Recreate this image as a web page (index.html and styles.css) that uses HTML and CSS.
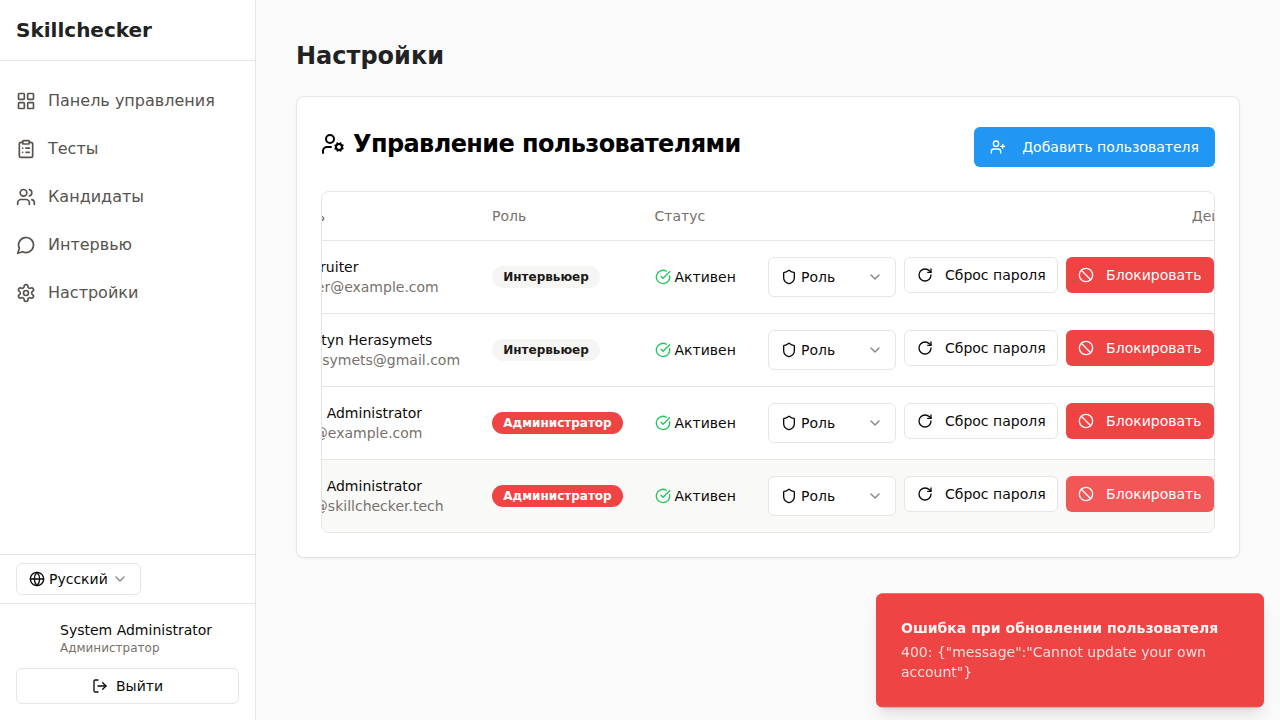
FILE: index.html
```html
<!DOCTYPE html>
<html lang="ru">
<head>
  <meta charset="UTF-8" />
  <meta name="viewport" content="width=device-width, initial-scale=1.0"/>
  <title>Skillchecker - Настройки</title>
  <link rel="stylesheet" href="styles.css">
</head>
<body>
  <!-- icon sprite -->
  <svg class="sprite" xmlns="http://www.w3.org/2000/svg">
    <symbol id="i-grid" viewBox="0 0 24 24"><rect x="3" y="3" width="7" height="7" rx="1"/><rect x="14" y="3" width="7" height="7" rx="1"/><rect x="14" y="14" width="7" height="7" rx="1"/><rect x="3" y="14" width="7" height="7" rx="1"/></symbol>
    <symbol id="i-clipboard" viewBox="0 0 24 24"><rect x="8" y="2" width="8" height="4" rx="1"/><path d="M16 4h2a2 2 0 0 1 2 2v14a2 2 0 0 1-2 2H6a2 2 0 0 1-2-2V6a2 2 0 0 1 2-2h2"/><path d="M12 11h4"/><path d="M12 16h4"/><path d="M8 11h.01"/><path d="M8 16h.01"/></symbol>
    <symbol id="i-users" viewBox="0 0 24 24"><path d="M16 21v-2a4 4 0 0 0-4-4H6a4 4 0 0 0-4 4v2"/><circle cx="9" cy="7" r="4"/><path d="M22 21v-2a4 4 0 0 0-3-3.87"/><path d="M16 3.13a4 4 0 0 1 0 7.75"/></symbol>
    <symbol id="i-message" viewBox="0 0 24 24"><path d="M7.9 20A9 9 0 1 0 4 16.1L2 22Z"/></symbol>
    <symbol id="i-settings" viewBox="0 0 24 24"><path d="M12.22 2h-.44a2 2 0 0 0-2 2v.18a2 2 0 0 1-1 1.73l-.43.25a2 2 0 0 1-2 0l-.15-.08a2 2 0 0 0-2.73.73l-.22.38a2 2 0 0 0 .73 2.73l.15.1a2 2 0 0 1 1 1.72v.51a2 2 0 0 1-1 1.74l-.15.09a2 2 0 0 0-.73 2.73l.22.38a2 2 0 0 0 2.73.73l.15-.08a2 2 0 0 1 2 0l.43.25a2 2 0 0 1 1 1.73V20a2 2 0 0 0 2 2h.44a2 2 0 0 0 2-2v-.18a2 2 0 0 1 1-1.73l.43-.25a2 2 0 0 1 2 0l.15.08a2 2 0 0 0 2.73-.73l.22-.39a2 2 0 0 0-.73-2.73l-.15-.08a2 2 0 0 1-1-1.74v-.5a2 2 0 0 1 1-1.74l.15-.09a2 2 0 0 0 .73-2.73l-.22-.38a2 2 0 0 0-2.73-.73l-.15.08a2 2 0 0 1-2 0l-.43-.25a2 2 0 0 1-1-1.73V4a2 2 0 0 0-2-2z"/><circle cx="12" cy="12" r="3"/></symbol>
    <symbol id="i-globe" viewBox="0 0 24 24"><circle cx="12" cy="12" r="10"/><path d="M12 2a14.5 14.5 0 0 0 0 20 14.5 14.5 0 0 0 0-20"/><path d="M2 12h20"/></symbol>
    <symbol id="i-chevron" viewBox="0 0 24 24"><path d="m6 9 6 6 6-6"/></symbol>
    <symbol id="i-logout" viewBox="0 0 24 24"><path d="M9 21H5a2 2 0 0 1-2-2V5a2 2 0 0 1 2-2h4"/><path d="m16 17 5-5-5-5"/><path d="M21 12H9"/></symbol>
    <symbol id="i-usercog" viewBox="0 0 24 24"><circle cx="18" cy="15" r="3"/><circle cx="9" cy="7" r="4"/><path d="M10 15H6a4 4 0 0 0-4 4v2"/><path d="m21.7 16.4-.9-.3"/><path d="m15.2 13.9-.9-.3"/><path d="m16.6 18.7.3-.9"/><path d="m19.1 12.2.3-.9"/><path d="m19.6 18.7-.4-1"/><path d="m16.8 12.3-.4-1"/><path d="m14.3 16.6 1-.4"/><path d="m20.7 13.8 1-.4"/></symbol>
    <symbol id="i-userplus" viewBox="0 0 24 24"><path d="M16 21v-2a4 4 0 0 0-4-4H6a4 4 0 0 0-4 4v2"/><circle cx="9" cy="7" r="4"/><path d="M19 8v6"/><path d="M22 11h-6"/></symbol>
    <symbol id="i-check" viewBox="0 0 24 24"><path d="M21.801 10A10 10 0 1 1 17 3.335"/><path d="m9 11 3 3L22 4"/></symbol>
    <symbol id="i-shield" viewBox="0 0 24 24"><path d="M20 13c0 5-3.5 7.5-7.66 8.95a1 1 0 0 1-.67-.01C7.5 20.5 4 18 4 13V6a1 1 0 0 1 1-1c2 0 4.5-1.2 6.24-2.72a1.17 1.17 0 0 1 1.52 0C14.51 3.81 17 5 19 5a1 1 0 0 1 1 1z"/></symbol>
    <symbol id="i-rotate" viewBox="0 0 24 24"><path d="M21 12a9 9 0 1 1-9-9c2.52 0 4.93 1 6.74 2.74L21 8"/><path d="M21 3v5h-5"/></symbol>
    <symbol id="i-ban" viewBox="0 0 24 24"><circle cx="12" cy="12" r="10"/><path d="m4.9 4.9 14.2 14.2"/></symbol>
  </svg>

  <div class="app">
    <aside class="sidebar">
      <div class="logo">Skillchecker</div>
      <nav class="nav">
        <a class="nav-item"><svg class="icon icon-20"><use href="#i-grid"/></svg>Панель управления</a>
        <a class="nav-item"><svg class="icon icon-20"><use href="#i-clipboard"/></svg>Тесты</a>
        <a class="nav-item"><svg class="icon icon-20"><use href="#i-users"/></svg>Кандидаты</a>
        <a class="nav-item"><svg class="icon icon-20"><use href="#i-message"/></svg>Интервью</a>
        <a class="nav-item"><svg class="icon icon-20"><use href="#i-settings"/></svg>Настройки</a>
      </nav>
      <div class="lang-box">
        <button class="lang-btn">
          <svg class="icon"><use href="#i-globe"/></svg>
          <span>Русский</span>
          <svg class="icon chevron"><use href="#i-chevron"/></svg>
        </button>
      </div>
      <div class="user-box">
        <div class="user-info">
          <span class="avatar"></span>
          <div>
            <div class="user-name">System Administrator</div>
            <div class="user-role">Администратор</div>
          </div>
        </div>
        <button class="logout-btn"><svg class="icon"><use href="#i-logout"/></svg>Выйти</button>
      </div>
    </aside>

    <main class="main">
      <h1 class="page-title">Настройки</h1>
      <section class="card">
        <div class="card-head">
          <h2 class="card-title"><svg class="icon icon-24"><use href="#i-usercog"/></svg>Управление пользователями</h2>
          <button class="add-btn"><svg class="icon"><use href="#i-userplus"/></svg>Добавить пользователя</button>
        </div>

        <div class="table-wrap">
          <table class="users">
            <thead>
              <tr>
                <th class="col-user">Пользователь</th>
                <th class="col-role">Роль</th>
                <th class="col-status">Статус</th>
                <th class="col-actions">Действия</th>
              </tr>
            </thead>
            <tbody>
              <tr>
                <td>
                  <div class="name">HR Recruiter</div>
                  <div class="email">recruiter@example.com</div>
                </td>
                <td><span class="badge">Интервьюер</span></td>
                <td><span class="status"><svg class="icon"><use href="#i-check"/></svg>Активен</span></td>
                <td>
                  <div class="actions">
                    <div class="role-select"><svg class="icon"><use href="#i-shield"/></svg><span>Роль</span><svg class="icon chevron"><use href="#i-chevron"/></svg></div>
                    <button class="btn"><svg class="icon"><use href="#i-rotate"/></svg>Сброс пароля</button>
                    <button class="btn btn-red"><svg class="icon"><use href="#i-ban"/></svg>Блокировать</button>
                  </div>
                </td>
              </tr>
              <tr>
                <td>
                  <div class="name">Kostiantyn Herasymets</div>
                  <div class="email">ko.herasymets@gmail.com</div>
                </td>
                <td><span class="badge">Интервьюер</span></td>
                <td><span class="status"><svg class="icon"><use href="#i-check"/></svg>Активен</span></td>
                <td>
                  <div class="actions">
                    <div class="role-select"><svg class="icon"><use href="#i-shield"/></svg><span>Роль</span><svg class="icon chevron"><use href="#i-chevron"/></svg></div>
                    <button class="btn"><svg class="icon"><use href="#i-rotate"/></svg>Сброс пароля</button>
                    <button class="btn btn-red"><svg class="icon"><use href="#i-ban"/></svg>Блокировать</button>
                  </div>
                </td>
              </tr>
              <tr>
                <td>
                  <div class="name">System Administrator</div>
                  <div class="email">admin@example.com</div>
                </td>
                <td><span class="badge badge-admin">Администратор</span></td>
                <td><span class="status"><svg class="icon"><use href="#i-check"/></svg>Активен</span></td>
                <td>
                  <div class="actions">
                    <div class="role-select"><svg class="icon"><use href="#i-shield"/></svg><span>Роль</span><svg class="icon chevron"><use href="#i-chevron"/></svg></div>
                    <button class="btn"><svg class="icon"><use href="#i-rotate"/></svg>Сброс пароля</button>
                    <button class="btn btn-red"><svg class="icon"><use href="#i-ban"/></svg>Блокировать</button>
                  </div>
                </td>
              </tr>
              <tr class="row-hover">
                <td>
                  <div class="name">System Administrator</div>
                  <div class="email">admin@skillchecker.tech</div>
                </td>
                <td><span class="badge badge-admin">Администратор</span></td>
                <td><span class="status"><svg class="icon"><use href="#i-check"/></svg>Активен</span></td>
                <td>
                  <div class="actions">
                    <div class="role-select"><svg class="icon"><use href="#i-shield"/></svg><span>Роль</span><svg class="icon chevron"><use href="#i-chevron"/></svg></div>
                    <button class="btn"><svg class="icon"><use href="#i-rotate"/></svg>Сброс пароля</button>
                    <button class="btn btn-red btn-faded"><svg class="icon"><use href="#i-ban"/></svg>Блокировать</button>
                  </div>
                </td>
              </tr>
            </tbody>
          </table>
        </div>
      </section>
    </main>
  </div>

  <div class="toast">
    <div class="toast-title">Ошибка при обновлении пользователя</div>
    <div class="toast-text">400: {"message":"Cannot update your own account"}</div>
  </div>
</body>
</html>
```

FILE: styles.css
```css
* {
  box-sizing: border-box;
}
html, body {
  height: 100%;
}
body {
  margin: 0;
  font-family: "DejaVu Sans", sans-serif;
  font-size: 14px;
  line-height: 20px;
  color: #0c0a09;
  background: #fafafa;
  overflow: hidden;
}
button {
  font: inherit;
  color: inherit;
  background: none;
  cursor: pointer;
}
.sprite {
  display: none;
}
.icon {
  width: 16px;
  height: 16px;
  flex: none;
  fill: none;
  stroke: currentColor;
  stroke-width: 2;
  stroke-linecap: round;
  stroke-linejoin: round;
}
.icon-20 { width: 20px; height: 20px; }
.icon-24 { width: 24px; height: 24px; }
.chevron { opacity: 0.5; }

.app {
  display: flex;
  height: 100%;
}

/* sidebar */
.sidebar {
  width: 256px;
  flex: none;
  display: flex;
  flex-direction: column;
  background: #fff;
  border-right: 1px solid #e7e5e4;
}
.logo {
  height: 61px;
  padding: 0 16px;
  display: flex;
  align-items: center;
  font-size: 20px;
  font-weight: bold;
  color: #222;
  border-bottom: 1px solid #e7e5e4;
}
.nav {
  flex: 1;
  padding: 16px 16px 0;
}
.nav-item {
  height: 48px;
  display: flex;
  align-items: center;
  gap: 12px;
  font-size: 16px;
  color: #57534e;
}
.lang-box {
  padding: 8px 16px;
  border-top: 1px solid #e7e5e4;
}
.lang-btn {
  height: 32px;
  width: 125px;
  padding: 0 12px;
  display: flex;
  align-items: center;
  gap: 4px;
  background: #fff;
  border: 1px solid #e7e5e4;
  border-radius: 6px;
}
.lang-btn .chevron {
  margin-left: auto;
}
.user-box {
  padding: 16px;
  border-top: 1px solid #e7e5e4;
}
.user-info {
  display: flex;
  gap: 12px;
  margin-bottom: 12px;
}
.avatar {
  width: 32px;
  height: 32px;
  flex: none;
}
.user-role {
  font-size: 12px;
  line-height: 16px;
  color: #78716c;
}
.logout-btn {
  width: 100%;
  height: 36px;
  display: flex;
  align-items: center;
  justify-content: center;
  gap: 8px;
  background: #fff;
  border: 1px solid #e7e5e4;
  border-radius: 6px;
}

/* main */
.main {
  flex: 1;
  padding: 40px;
  min-width: 0;
}
.page-title {
  margin: 0 0 24px;
  font-size: 24px;
  line-height: 32px;
  font-weight: bold;
  color: #222;
}
.card {
  padding: 30px 24px 24px;
  background: #fff;
  border: 1px solid #e7e5e4;
  border-radius: 8px;
  box-shadow: 0 1px 2px rgba(0, 0, 0, 0.05);
}
.card-head {
  display: flex;
  justify-content: space-between;
  align-items: flex-start;
  margin-bottom: 24px;
}
.card-title {
  margin: 1px 0 0;
  display: flex;
  align-items: center;
  gap: 8px;
  font-size: 24px;
  line-height: 32px;
  letter-spacing: -0.6px;
  font-weight: bold;
  color: #000;
}
.add-btn {
  height: 40px;
  padding: 0 16px;
  display: flex;
  align-items: center;
  gap: 16px;
  color: #fff;
  background: #2196f3;
  border: none;
  border-radius: 6px;
}

/* users table, scrolled sideways inside its frame */
.table-wrap {
  overflow: hidden;
  background: #fff;
  border: 1px solid #e7e5e4;
  border-radius: 8px;
}
.users {
  width: 1016px;
  margin-left: -68px;
  table-layout: fixed;
  border-collapse: separate;
  border-spacing: 0;
}
.col-user { width: 222px; }
.col-role { width: 162.5px; }
.col-status { width: 113.5px; }
.users th {
  height: 49px;
  padding: 0 16px;
  text-align: left;
  font-weight: normal;
  color: #78716c;
  border-bottom: 1px solid #e7e5e4;
}
.users th.col-user {
  text-indent: -48px;
}
.users th.col-actions {
  padding-right: 8px;
  text-align: right;
}
.users td {
  height: 73px;
  padding: 16px;
  white-space: nowrap;
  border-bottom: 1px solid #e7e5e4;
}
.users tbody tr:last-child td {
  height: 72px;
  border-bottom: none;
}
.row-hover {
  background: #f9f9f7;
}
.email {
  color: #78716c;
}
.badge {
  display: inline-block;
  padding: 2px 11.25px;
  font-size: 12px;
  line-height: 18px;
  font-weight: bold;
  color: #1c1917;
  background: #f5f5f4;
  border-radius: 11px;
}
.badge-admin {
  color: #fff;
  background: #ef4444;
}
.status {
  display: flex;
  align-items: center;
  gap: 4px;
}
.status .icon {
  color: #22c55e;
}
.actions {
  display: flex;
  align-items: flex-start;
  gap: 8px;
}
.role-select {
  width: 128px;
  height: 40px;
  padding: 0 12px;
  display: flex;
  align-items: center;
  gap: 4px;
  background: #fff;
  border: 1px solid #e7e5e4;
  border-radius: 6px;
}
.role-select .chevron {
  margin-left: auto;
}
.btn {
  height: 36px;
  padding: 0 11.5px 0 12px;
  display: flex;
  align-items: center;
  gap: 12px;
  background: #fff;
  border: 1px solid #e7e5e4;
  border-radius: 6px;
}
.btn-red {
  width: 148px;
  padding: 0 12px;
  color: #fff;
  background: #ef4444;
  border: none;
}
.btn-faded {
  background: #f15757;
}

/* toast */
.toast {
  position: fixed;
  right: 16px;
  bottom: 12px;
  width: 388px;
  padding: 24px;
  color: #fff;
  background: #ef4444;
  border: 1px solid #ef4444;
  border-radius: 6px;
  box-shadow: 0 10px 15px -3px rgba(0, 0, 0, 0.1), 0 4px 6px -4px rgba(0, 0, 0, 0.1);
  transform: translateY(-0.67px);
  will-change: transform;
}
.toast-title {
  font-weight: bold;
  margin-bottom: 4px;
  opacity: 0.95;
}
.toast-text {
  opacity: 0.82;
}
```
